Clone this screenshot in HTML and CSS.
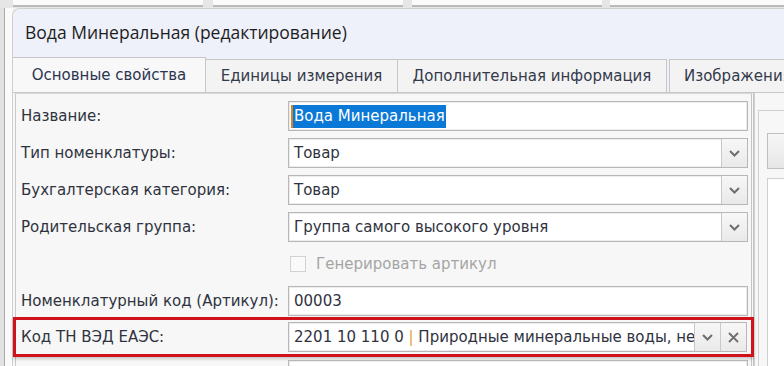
FILE: index.html
```html
<!DOCTYPE html>
<html lang="ru">
<head>
    <meta charset="UTF-8">
    <title>Вода Минеральная (редактирование)</title>
    <link rel="stylesheet" href="styles.css">
</head>
<body>
    <div class="top-strip">
        <div class="strip-bar bar-a"></div>
        <div class="strip-bar bar-b"></div>
        <div class="strip-bar bar-c"></div>
        <div class="strip-bar bar-d"></div>
    </div>
    <div class="main">
        <div class="gutter"></div>
        <div class="window">
            <div class="window-head">Вода Минеральная (редактирование)</div>
            <div class="tabs">
                <div class="tab active">Основные свойства</div>
                <div class="tab">Единицы измерения</div>
                <div class="tab">Дополнительная информация</div>
                <div class="tab">Изображения</div>
            </div>
            <div class="tab-body">
                <div class="form">
                    <div class="row">
                        <label>Название:</label>
                        <div class="field"><span class="text selected">Вода Минеральная</span></div>
                    </div>
                    <div class="row">
                        <label>Тип номенклатуры:</label>
                        <div class="field"><span class="text">Товар</span><span class="btn"><svg width="11" height="7" viewBox="0 0 11 7"><path d="M1 1 L5.5 5.5 L10 1" fill="none" stroke="#6e6e6e" stroke-width="2"/></svg></span></div>
                    </div>
                    <div class="row">
                        <label>Бухгалтерская категория:</label>
                        <div class="field"><span class="text">Товар</span><span class="btn"><svg width="11" height="7" viewBox="0 0 11 7"><path d="M1 1 L5.5 5.5 L10 1" fill="none" stroke="#6e6e6e" stroke-width="2"/></svg></span></div>
                    </div>
                    <div class="row">
                        <label>Родительская группа:</label>
                        <div class="field"><span class="text">Группа самого высокого уровня</span><span class="btn"><svg width="11" height="7" viewBox="0 0 11 7"><path d="M1 1 L5.5 5.5 L10 1" fill="none" stroke="#6e6e6e" stroke-width="2"/></svg></span></div>
                    </div>
                    <div class="row check-row">
                        <span class="check"></span>
                        <span class="check-label">Генерировать артикул</span>
                    </div>
                    <div class="row">
                        <label>Номенклатурный код (Артикул):</label>
                        <div class="field"><span class="text">00003</span></div>
                    </div>
                    <div class="row marked">
                        <label>Код ТН ВЭД ЕАЭС:</label>
                        <div class="field"><span class="text">2201 10 110 0 <span class="sep">|</span> Природные минеральные воды, не газированные</span><span class="btn"><svg width="11" height="7" viewBox="0 0 11 7"><path d="M1 1 L5.5 5.5 L10 1" fill="none" stroke="#6e6e6e" stroke-width="2"/></svg></span><span class="btn"><svg width="11" height="11" viewBox="0 0 11 11"><path d="M1 1 L10 10 M10 1 L1 10" fill="none" stroke="#6e6e6e" stroke-width="1.8"/></svg></span></div>
                    </div>
                    <div class="row">
                        <label></label>
                        <div class="field"></div>
                    </div>
                </div>
                <div class="side">
                    <div class="side-head"></div>
                    <div class="side-panel">
                        <div class="side-btn"></div>
                        <div class="side-box"></div>
                    </div>
                </div>
            </div>
        </div>
    </div>
</body>
</html>
```

FILE: styles.css
```css
body {
    margin: 0;
    width: 784px;
    height: 366px;
    overflow: hidden;
    background: #f4f4f4;
    font-family: "DejaVu Sans", Verdana, sans-serif;
    color: #2f3340;
}

.top-strip {
    display: flex;
    height: 8px;
    background: #e6e6e6;
}

.strip-bar {
    height: 5px;
    background: #fbfbfb;
    border-bottom: 2px solid #b9b9b9;
}

.bar-a { width: 190px; margin-left: 13px; }
.bar-b { width: 190px; margin-left: 10px; }
.bar-c { width: 190px; margin-left: 9px; }
.bar-d { flex: 1; margin-left: 8px; }

.main {
    display: flex;
    height: 358px;
}

.gutter {
    flex: none;
    width: 8px;
    background: #fafafa;
    border-left: 4px solid #e2e2e2;
    box-shadow: inset 1px 0 0 #a9a9a9;
}

.window {
    flex: 1;
    display: flex;
    flex-direction: column;
    background: #f7f7f7;
    border-left: 1px solid #cfcfcf;
    border-top: 1px solid #cfcfcf;
    border-top-left-radius: 8px;
}

.window-head {
    flex: none;
    height: 48px;
    padding-left: 12px;
    background: #eef1fa;
    border-top-left-radius: 8px;
    font-family: "Open Sans", "Noto Sans", sans-serif;
    font-size: 17.5px;
    color: #1e1e1e;
    line-height: 46px;
}

.tabs {
    flex: none;
    display: flex;
    height: 35px;
    background: #eef1fa;
}

.tab {
    display: flex;
    align-items: center;
    justify-content: center;
    margin-top: 2px;
    background: #f3f3f3;
    border: 1px solid #c7c7c7;
    border-left: none;
    border-bottom: none;
    font-size: 15px;
    color: #333a4a;
}

.tab:nth-child(2) { width: 191px; }
.tab:nth-child(3) { width: 268px; }
.tab:nth-child(4) { flex: 1; justify-content: flex-start; padding-left: 14px; margin-left: 2px; border-left: 1px solid #c7c7c7; white-space: nowrap; overflow: hidden; }

.tab.active {
    width: 192px;
    margin-top: 0;
    background: #f8f8f8;
    color: #2c3550;
}

.tab-body {
    flex: 1;
    display: flex;
    background: #f7f7f7;
    border-top: 1px solid #c7c7c7;
}

.form {
    flex: none;
    width: 735px;
    margin-left: 2px;
    padding-top: 7px;
    border-left: 1px solid #c9c9c9;
    border-right: 3px double #c4c4c4;
    border-top: 1px solid #d8d8d8;
}

.row {
    display: flex;
    align-items: center;
    height: 30px;
    margin-bottom: 7px;
    padding-left: 5px;
}

.row label {
    width: 267px;
    font-size: 15px;
    white-space: nowrap;
}

.field {
    width: 458px;
    height: 28px;
    display: flex;
    align-items: center;
    background: #fff;
    border: 1px solid #b7b7b7;
    box-shadow: inset 0 0 0 1px #ececec;
    overflow: hidden;
}

.text {
    flex: 1;
    padding-left: 5px;
    font-size: 15px;
    white-space: nowrap;
    overflow: hidden;
    color: #2f3340;
}

.text.selected {
    flex: none;
    margin-left: 2px;
    padding: 2px 1px 3px 1px;
    background: #0a78d7;
    color: #fff;
    border-left: 2px solid #e08020;
}

.sep {
    color: #e0a040;
}

.btn {
    flex: none;
    width: 25px;
    height: 28px;
    display: flex;
    align-items: center;
    justify-content: center;
    background: linear-gradient(#f7f7f7, #e9e9e9);
    border-left: 1px solid #c9c9c9;
}

.check-row {
    margin-top: 1px;
    padding-left: 274px;
}

.check {
    width: 14px;
    height: 14px;
    background: #fafafa;
    border: 1px solid #d2d2d2;
}

.check-label {
    margin-left: 10px;
    font-size: 15px;
    color: #a5a5a5;
}

.marked {
    margin-left: -3px;
    margin-top: -6px;
    margin-bottom: 3px;
    width: 730px;
    height: 34px;
    border: 3px solid #d0121b;
    box-shadow: 0 2px 3px rgba(0, 0, 0, 0.2);
}

.marked .field {
    width: 457px;
}

.side {
    flex: 1;
    display: flex;
    flex-direction: column;
    border-left: 1px solid #cfcfcf;
}

.side-head {
    height: 17px;
}

.side-panel {
    flex: 1;
    padding: 22px 0 0 8px;
    border-top: 1px solid #d0d0d0;
    border-left: 1px solid #d0d0d0;
    margin-left: 3px;
}

.side-btn {
    height: 34px;
    background: linear-gradient(#f6f6f6, #e6e6e6);
    border: 1px solid #bfbfbf;
    border-right: none;
}

.side-box {
    height: 200px;
    margin-top: 9px;
    background: #fff;
    border: 1px solid #cfcfcf;
    border-right: none;
}
```
